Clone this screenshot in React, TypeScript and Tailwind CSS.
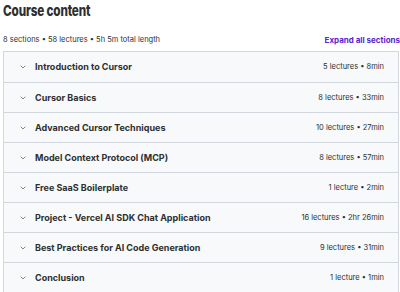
import React from "react";

type Section = {
  title: string;
  meta: string;
};

const sections: Section[] = [
  { title: "Introduction to Cursor", meta: "5 lectures • 8min" },
  { title: "Cursor Basics", meta: "8 lectures • 33min" },
  { title: "Advanced Cursor Techniques", meta: "10 lectures • 27min" },
  { title: "Model Context Protocol (MCP)", meta: "8 lectures • 57min" },
  { title: "Free SaaS Boilerplate", meta: "1 lecture • 2min" },
  { title: "Project - Vercel AI SDK Chat Application", meta: "16 lectures • 2hr 26min" },
  { title: "Best Practices for AI Code Generation", meta: "9 lectures • 31min" },
  { title: "Conclusion", meta: "1 lecture • 1min" },
];

const Chevron = () => (
  <svg width="8" height="8" viewBox="0 0 24 24" fill="none" className="text-[#6a6f73]">
    <path d="M6 9l6 6 6-6" stroke="currentColor" strokeWidth="2.5" strokeLinecap="round" strokeLinejoin="round" />
  </svg>
);

export default function App() {
  return (
    <div className="w-[400px] h-[292px] overflow-hidden bg-white pl-[3px] font-['Inter',sans-serif] text-[#2d2f31]">
      {/* Header */}
      <h2 className="h-[21px] pt-[1px] text-[15px] font-extrabold leading-[20px] tracking-[-0.2px]">
        <span className="block origin-left scale-x-[0.78]">Course content</span>
      </h2>

      <div className="mt-[13px] flex items-center justify-between">
        <span className="text-[7.5px] text-[#2d2f31]">8 sections • 58 lectures • 5h 5m total length</span>
        <span className="text-[8px] font-bold text-[#5624d0] whitespace-nowrap">Expand all sections</span>
      </div>

      {/* Sections */}
      <div className="mt-[5px] w-[396px] border border-[#d1d7dc]">
        {sections.map((s, i) => (
          <div
            key={s.title}
            className={`flex h-[30px] items-center bg-[#f7f9fa] pl-[15px] pr-[14px] ${
              i > 0 ? "border-t border-[#d1d7dc]" : ""
            }`}
          >
            <Chevron />
            <span className="ml-[8px] text-[9px] font-bold">{s.title}</span>
            <span className="ml-auto text-[7.5px] text-[#2d2f31]">{s.meta}</span>
          </div>
        ))}
      </div>
    </div>
  );
}
